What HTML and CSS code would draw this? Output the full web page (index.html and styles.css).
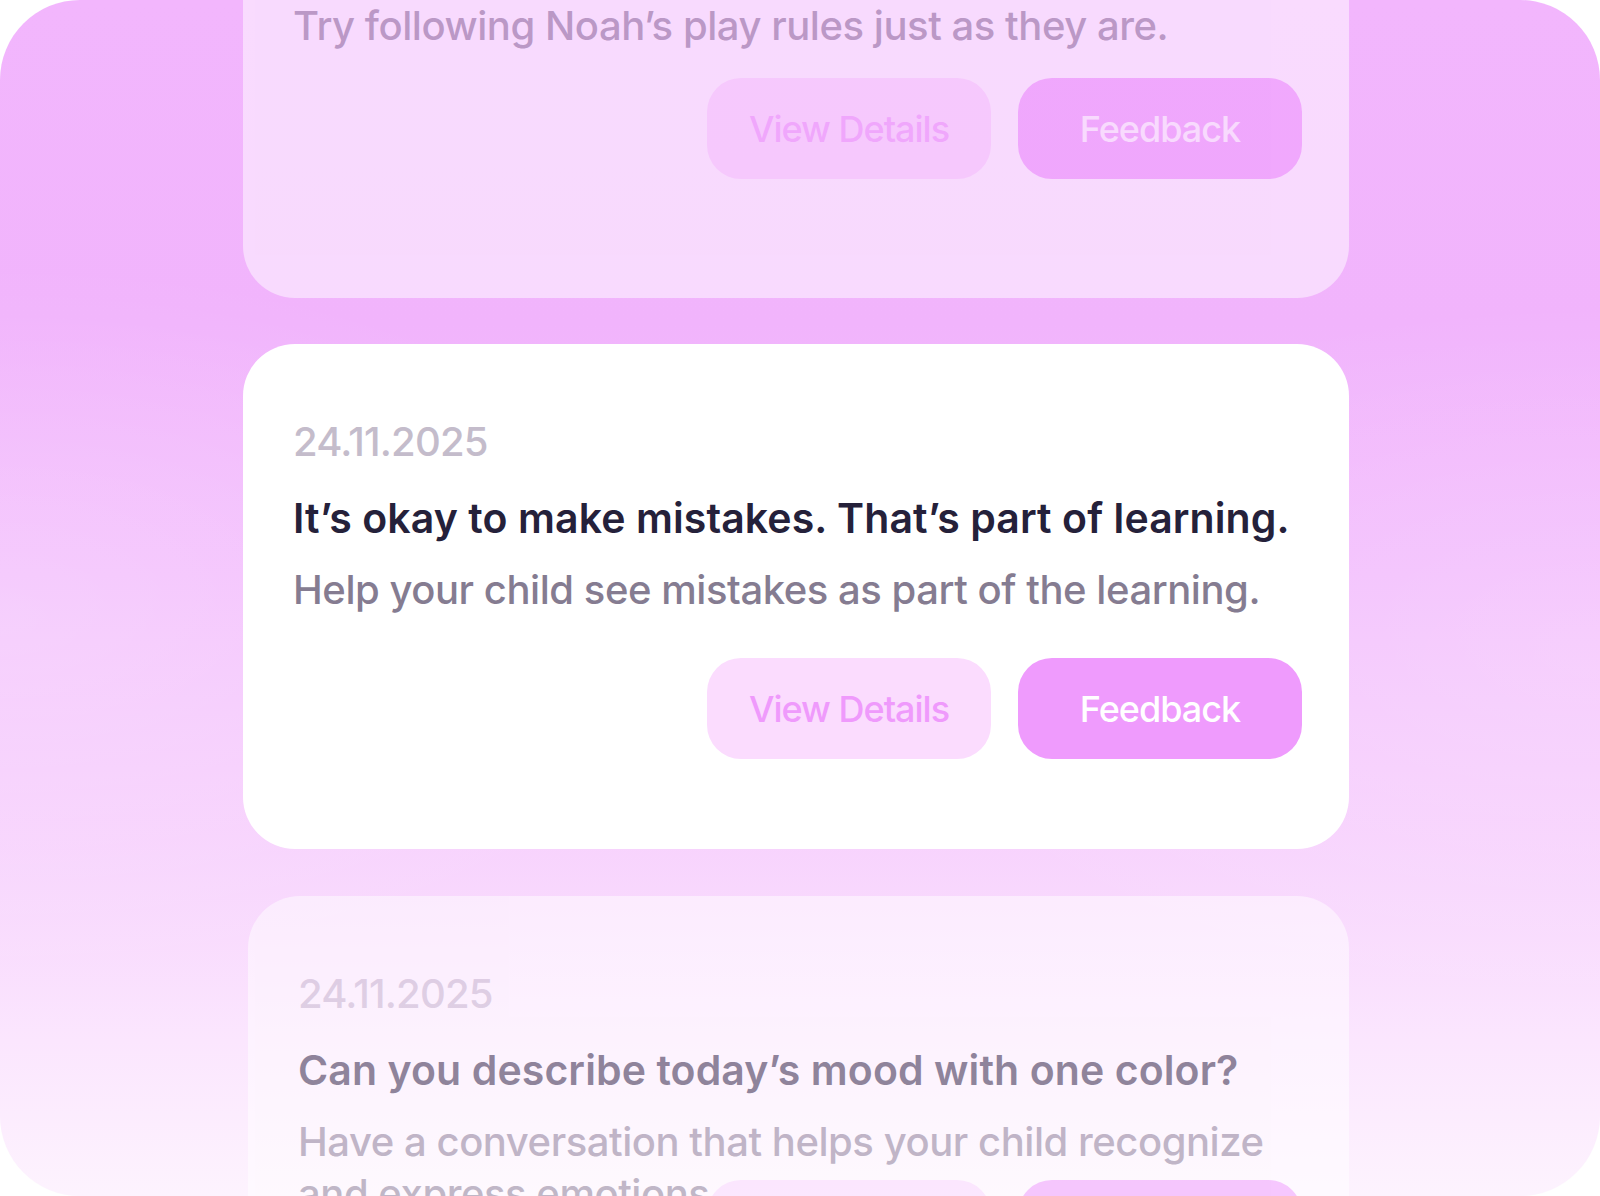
FILE: index.html
```html
<!DOCTYPE html>
<html lang="en">
<head>
<meta charset="utf-8">
<title>Daily tips</title>
<link rel="stylesheet" href="styles.css">
</head>
<body>
<div class="frame">
  <div class="list">
    <article class="card card--prev">
      <p class="card__text">Try following Noah’s play rules just as they are.</p>
      <div class="card__actions">
        <button class="btn btn--soft">View Details</button>
        <button class="btn btn--solid">Feedback</button>
      </div>
    </article>
    <article class="card card--active">
      <p class="card__date">24.11.2025</p>
      <h2 class="card__title">It’s okay to make mistakes. That’s part of learning.</h2>
      <p class="card__text">Help your child see mistakes as part of the learning.</p>
      <div class="card__actions">
        <button class="btn btn--soft">View Details</button>
        <button class="btn btn--solid">Feedback</button>
      </div>
    </article>
    <article class="card card--next">
      <p class="card__date">24.11.2025</p>
      <h2 class="card__title">Can you describe today’s mood with one color?</h2>
      <p class="card__text">Have a conversation that helps your child recognize and express emotions.</p>
      <div class="card__actions">
        <button class="btn btn--soft">View Details</button>
        <button class="btn btn--solid">Feedback</button>
      </div>
    </article>
  </div>
</div>
</body>
</html>
```

FILE: styles.css
```css
* {
  box-sizing: border-box;
  margin: 0;
}

html,
body {
  background: #ffffff;
}

body {
  margin: 0;
  font-family: Inter, "Noto Sans", sans-serif;
}

.frame {
  width: 1600px;
  height: 1196px;
  border-radius: 80px;
  overflow: hidden;
  background:
    radial-gradient(ellipse 45% 30% at 0% 52%, rgba(255, 255, 255, 0.22), rgba(255, 255, 255, 0)),
    radial-gradient(ellipse 45% 30% at 100% 55%, rgba(255, 255, 255, 0.18), rgba(255, 255, 255, 0)),
    linear-gradient(180deg, #f2b6fd 0%, #f1b4fc 27%, #f3bffd 48%, #f7d2fd 70%, #fbe6fe 87%, #fdf3fe 100%);
}

.list {
  display: flex;
  flex-direction: column;
  gap: 46px;
  width: 1106px;
  margin: -74px 0 0 243px;
}

.card {
  background: #ffffff;
  border-radius: 52px;
  padding: 74px 47px 90px 50px;
}

.card--prev,
.card--next {
  opacity: 0.5;
}

.card--prev {
  padding-bottom: 119px;
}

.card--next {
  margin-left: 5px;
  margin-top: 1px;
}

.card__date {
  font-size: 40px;
  line-height: 48px;
  font-weight: 500;
  letter-spacing: -0.8px;
  color: #c4bccb;
  margin-bottom: 28px;
}

.card__title {
  font-size: 41px;
  line-height: 48px;
  font-weight: 600;
  letter-spacing: 0.1px;
  color: #25213a;
  margin-bottom: 22px;
}

.card__text {
  font-size: 40px;
  line-height: 52px;
  font-weight: 500;
  letter-spacing: -0.45px;
  color: #857c91;
}

.card--next .card__text {
  height: 52px;
}

.card__actions {
  display: flex;
  justify-content: flex-end;
  gap: 27px;
  margin-top: 42px;
}

.card--prev .card__actions {
  margin-top: 26px;
}

.card--next .card__actions {
  margin-top: 12px;
}

.btn {
  width: 284px;
  height: 101px;
  border: 0;
  border-radius: 34px;
  font-family: Inter, "Noto Sans", sans-serif;
  font-size: 36px;
  font-weight: 500;
  letter-spacing: -1px;
  line-height: 1;
  padding: 0;
}

.btn--soft {
  background: #fbdcfe;
  color: #ef9afc;
}

.btn--solid {
  background: #ef9bfd;
  color: #ffffff;
}
```
